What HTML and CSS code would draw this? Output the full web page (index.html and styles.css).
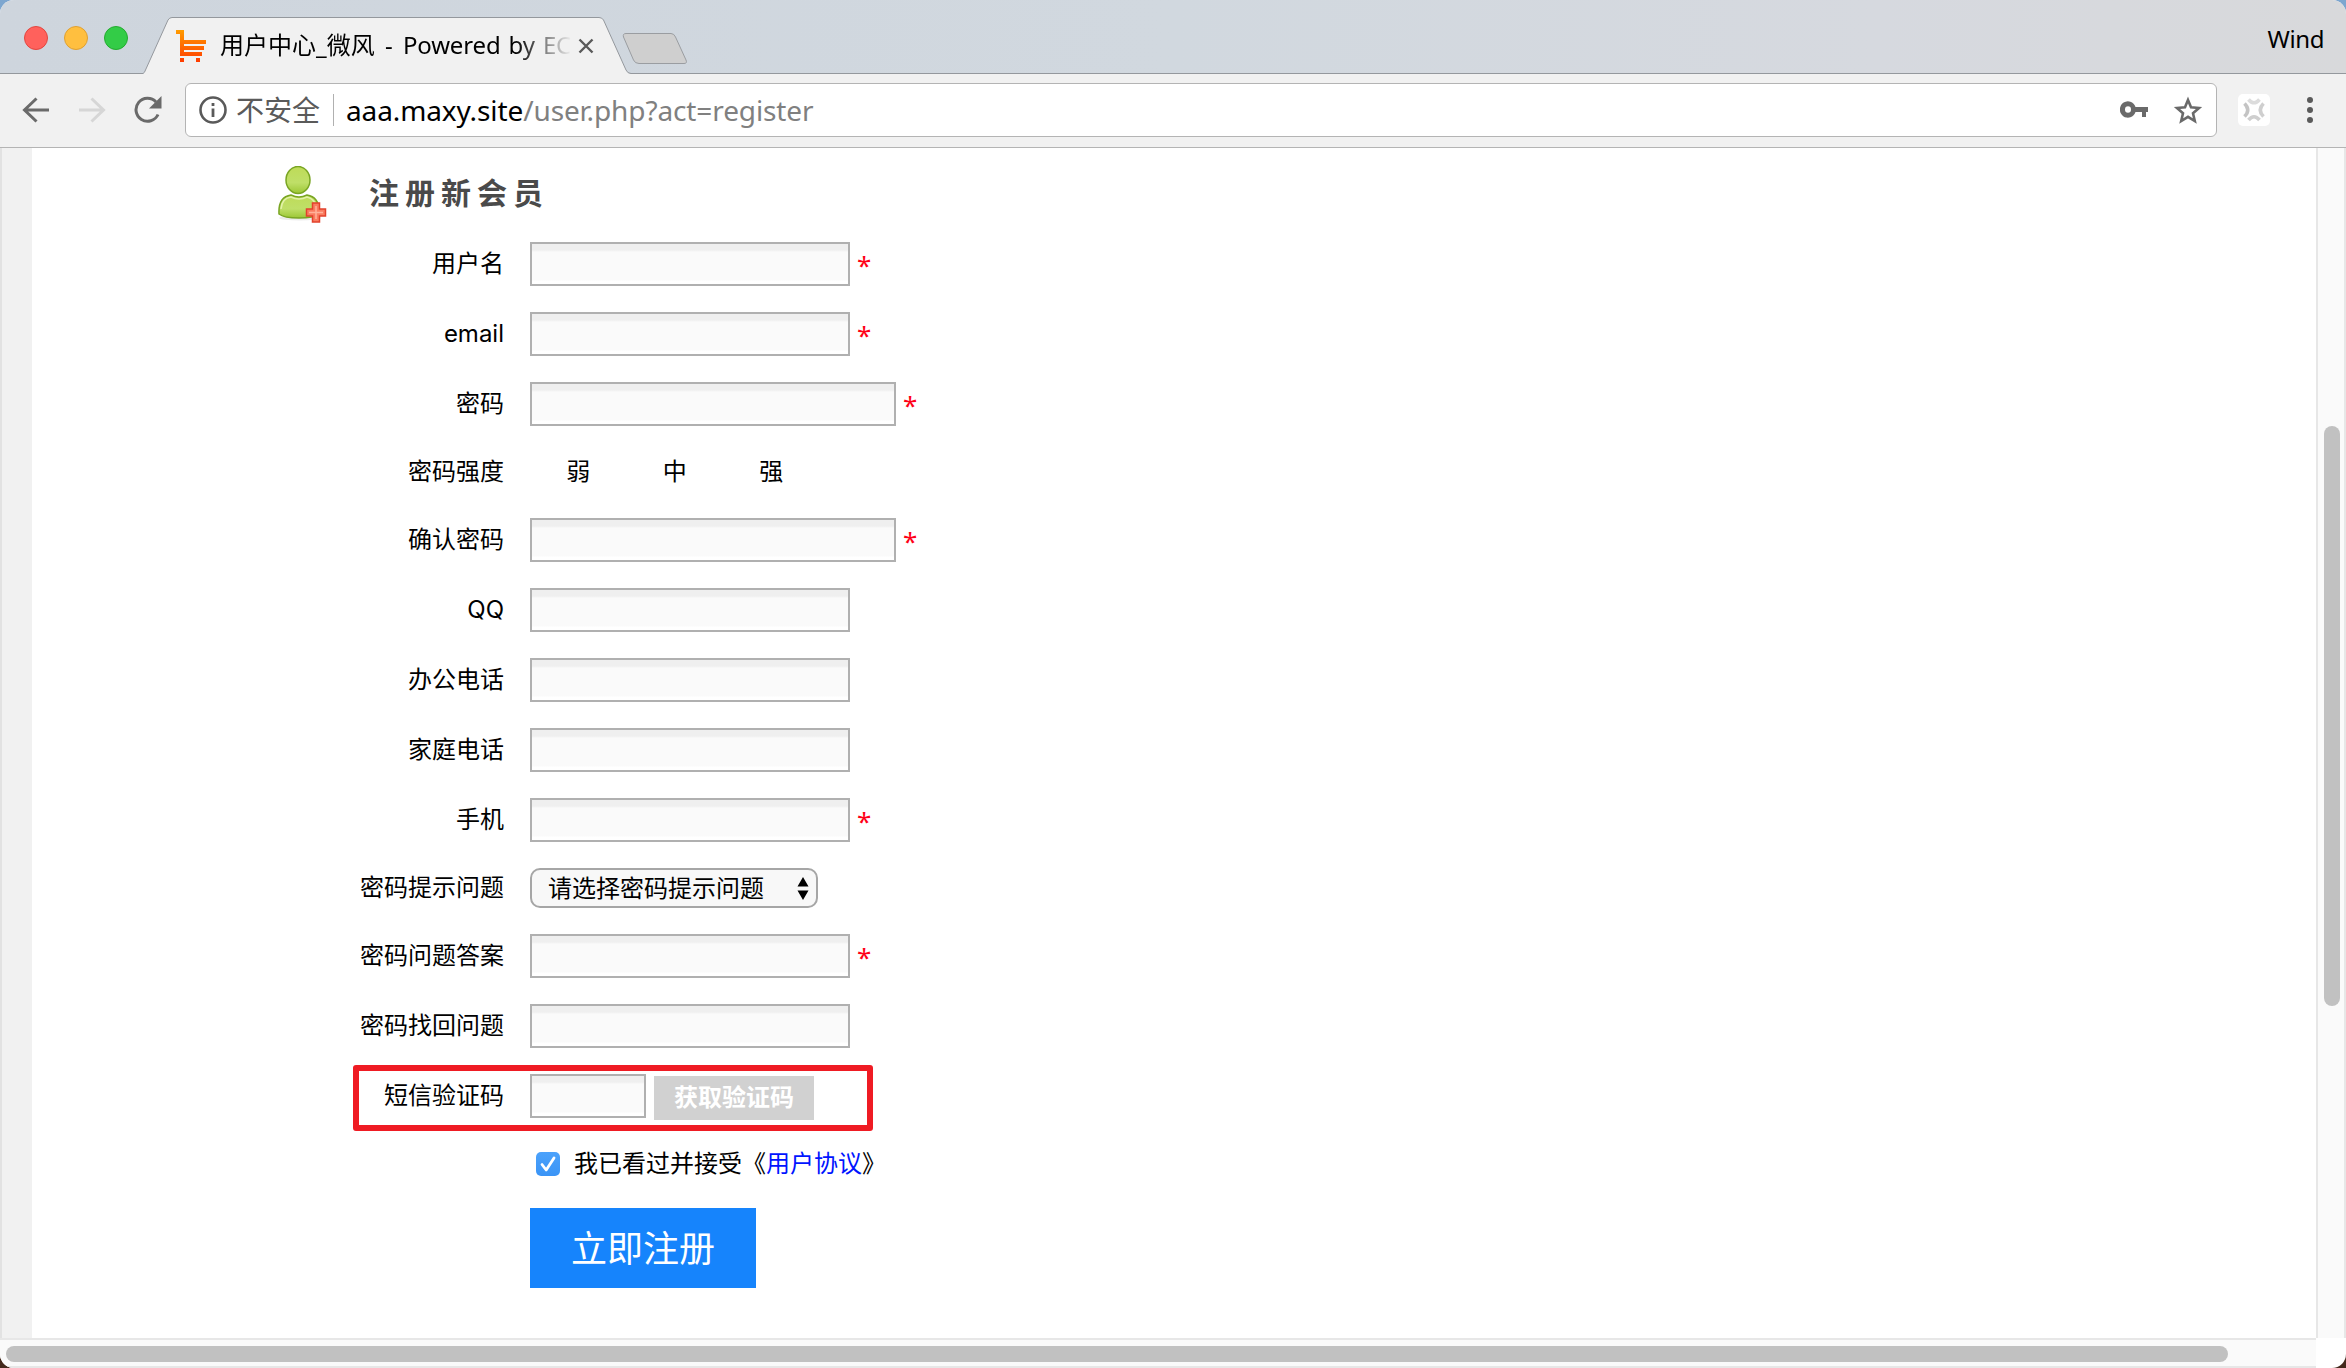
FILE: index.html
```html
<!DOCTYPE html>
<html lang="zh-CN">
<head>
<meta charset="utf-8">
<title>用户中心_微风</title>
<link rel="stylesheet" href="styles.css">
</head>
<body>
<div class="window">
  <header class="tabstrip">
    <div class="lights"><i class="light red"></i><i class="light amber"></i><i class="light green"></i></div>
    <div class="tab">
      <svg class="tab-shape" width="488" height="58" viewBox="0 0 488 58"><path d="M0 56.500 Q1.500 56 2.500 53 L25 3 Q26.500 .5 29 .5 H456 Q459 .5 460.500 3 L483 53 Q484.500 56.500 488 56.500 V58 H0Z" fill="#f1f1f1"/><path d="M0 56.500 Q1.500 56 2.500 53 L25 3 Q26.500 .5 29 .5 H456 Q459 .5 460.500 3 L483 53 Q484.500 56.500 488 56.500" fill="none" stroke="#94989d"/></svg>
      <svg class="cart" width="31" height="32" viewBox="0 0 31 32"><defs><linearGradient id="cg" gradientUnits="userSpaceOnUse" x1="0" y1="0" x2="0" y2="32"><stop offset="0" stop-color="#ff9c00"/><stop offset="1" stop-color="#ff3b00"/></linearGradient></defs><path fill="url(#cg)" d="M0 0H8V10H30V14H8V16H28V20H8V22H26V26H4V4H0ZM4 28H8V32H4ZM20 28H24V32H20Z"/></svg>
      <span class="tab-title"><span class="site-name">用户中心_微风 - </span>Powered by EC</span>
      <svg class="close" width="16" height="16" viewBox="0 0 16 16"><path d="M1.500 1.500 14.500 14.500M14.500 1.500 1.500 14.500" stroke="#5a5a5a" stroke-width="2.400"/></svg>
    </div>
    <svg class="newtab" width="66" height="34" viewBox="0 0 66 34"><path d="M4 1.500H49Q52 1.500 53.500 5L64 28Q65.500 31.500 62 31.500H17Q13 31.500 11.500 28L1.500 5Q.5 1.500 4 1.500Z" fill="#cfcfcf" stroke="#9a9da1"/></svg>
    <span class="profile">Wind</span>
  </header>
  <nav class="toolbar">
    <svg class="nav-back" width="28" height="26" viewBox="0 0 28 26"><path d="M27 13H3M14.500 1.500 2.500 13l12 11.500" fill="none" stroke="#6a6a6a" stroke-width="3"/></svg>
    <svg class="nav-forward" width="28" height="26" viewBox="0 0 28 26"><path d="M1 13H25M13.500 1.500 25.500 13l-12 11.500" fill="none" stroke="#d6d6d6" stroke-width="3"/></svg>
    <svg class="nav-reload" width="28" height="28" viewBox="0 0 28 28"><path d="M24 18.500A11.500 11.500 0 1 1 22 6" fill="none" stroke="#6a6a6a" stroke-width="3"/><path d="M27.500 0V12.500H15Z" fill="#6a6a6a"/></svg>
    <div class="omnibox">
      <svg width="28" height="28" viewBox="0 0 28 28"><circle cx="14" cy="14" r="12.500" fill="none" stroke="#5a5a5a" stroke-width="2.600"/><path d="M12.600 7h2.800v3h-2.800zM12.600 12.500h2.800v8.500h-2.800z" fill="#5a5a5a"/></svg>
      <span class="insecure">不安全</span>
      <span class="url"><b>aaa.maxy.site</b>/user.php?act=register</span>
      <svg class="key" width="28" height="18" viewBox="0 0 28 18"><path fill="#6a6a6a" fill-rule="evenodd" d="M15.500 6H28V11H26V16H22V11H15.500A8 8.200 0 1 1 15.500 6ZM8 5.300A3 3.200 0 1 0 8 11.700 3 3.200 0 1 0 8 5.300Z"/></svg>
      <svg class="star" width="30" height="29" viewBox="0 0 30 29"><path d="M15 4 18 11.300 26 12 20 17.200 21.800 25 15 20.800 8.200 25 10 17.200 4 12 12 11.300Z" fill="none" stroke="#6a6a6a" stroke-width="2.600"/></svg>
    </div>
    <div class="extension"><svg width="22" height="24" viewBox="0 0 22 24" fill="none" stroke-width="3.600"><path d="M5.500 1.500Q11 8 16.500 1.500" stroke="#dcdcdc"/><path d="M5.500 22Q11 15.500 16.500 22" stroke="#cfcfcf"/><path d="M1.500 5.500Q8 12 1.500 18.500" stroke="#c4c4c4"/><path d="M20.500 5.500Q14 12 20.500 18.500" stroke="#cfcfcf"/></svg></div>
    <div class="menu"><i></i><i></i><i></i></div>
  </nav>
  <div class="viewport">
    <main class="page">
      <div class="heading">
        <svg width="50" height="58" viewBox="0 0 50 58"><defs><linearGradient id="ug" x1="0" y1="0" x2="0" y2="1"><stop offset="0" stop-color="#bedb58"/><stop offset=".6" stop-color="#bfdf68"/><stop offset="1" stop-color="#9cc735"/></linearGradient></defs><ellipse cx="22" cy="52" rx="21" ry="2.500" fill="#ececec"/><path d="M1 48Q0 31 13 29Q21 33 29 29Q41 31 41 45V48Q36 52 21 52 6 52 1 48Z" fill="url(#ug)" stroke="#79a523" stroke-width="1.500"/><path d="M3 43Q4 32 13 31Q21 35 29 31Q37 33 39 42" fill="none" stroke="#e2f2a8" stroke-width="1.500"/><ellipse cx="20" cy="14" rx="12" ry="13.500" fill="url(#ug)" stroke="#79a523" stroke-width="1.500"/><path d="M34.500 37h7v6h6v7h-6v6h-7v-6h-6v-7h6z" fill="#fa7c60" stroke="#e2412c" stroke-width="1.500"/><path d="M31 46.500H45M38 40V53" stroke="#ffb29a" stroke-width="1.500"/></svg>
        <h1>注册新会员</h1>
      </div>
      <form class="form">
        <div class="row"><label>用户名</label><input class="field"><em>*</em></div>
        <div class="row"><label>email</label><input class="field"><em>*</em></div>
        <div class="row"><label>密码</label><input class="field wide"><em>*</em></div>
        <div class="row short"><label>密码强度</label><span class="strength"><span>弱</span><span>中</span><span>强</span></span></div>
        <div class="row"><label>确认密码</label><input class="field wide"><em>*</em></div>
        <div class="row"><label>QQ</label><input class="field"></div>
        <div class="row"><label>办公电话</label><input class="field"></div>
        <div class="row"><label>家庭电话</label><input class="field"></div>
        <div class="row"><label>手机</label><input class="field"><em>*</em></div>
        <div class="row short"><label>密码提示问题</label><span class="select"><span>请选择密码提示问题</span><svg width="12" height="24" viewBox="0 0 12 24"><path d="M6 0 11.500 9.500H.5ZM6 23 11.500 13.500H.5Z"/></svg></span></div>
        <div class="row"><label>密码问题答案</label><input class="field"><em>*</em></div>
        <div class="row"><label>密码找回问题</label><input class="field"></div>
        <div class="row sms"><label>短信验证码</label><input class="field code"><button type="button" class="get-code">获取验证码</button></div>
        <div class="row agree"><label></label><span class="check"><svg width="24" height="24" viewBox="0 0 24 24"><path d="M6 12.500 10.200 18 18 6" fill="none" stroke="#fff" stroke-width="2.800" stroke-linecap="round" stroke-linejoin="round"/></svg></span><span class="terms">我已看过并接受《<a>用户协议</a>》</span></div>
        <div class="row"><label></label><button type="button" class="submit">立即注册</button></div>
      </form>
    </main>
    <div class="vscroll"><i></i></div>
    <div class="hscroll"><i></i></div>
  </div>
</div>
</body>
</html>
```
FILE: styles.css
```css
*, *::after { box-sizing: border-box; }
body { margin: 0; background: linear-gradient(#7da6cf 0 50%, #44291c 50%); font: 24px/34px Inter, "Noto Sans CJK SC", sans-serif; color: #000; }
svg { display: block; flex: none; }
.window { width: 2346px; height: 1368px; border-radius: 14px; overflow: hidden; background: #fff; display: flex; flex-direction: column; }

.tabstrip { height: 74px; flex: none; background: linear-gradient(90deg, #ced5dd, #d1d8df 50%, #d6d9df 80%, #d8d9db); border-bottom: 1px solid #94989d; display: flex; align-items: flex-start; font-family: "Noto Sans", "Noto Sans CJK SC", sans-serif; }
.lights { display: flex; gap: 16px; padding: 26px 0 0 24px; width: 143px; flex: none; }
.light { width: 24px; height: 24px; border-radius: 50%; }
.red { background: #ff615c; border: 1px solid #e2463f; }
.amber { background: #ffbf3f; border: 1px solid #dfa032; }
.green { background: #33cc47; border: 1px solid #23ab2f; }
.tab { position: relative; width: 488px; height: 58px; margin-top: 17px; flex: none; display: flex; align-items: center; padding: 0 0 0 33px; }
.tab-shape { position: absolute; left: 0; top: 0; }
.cart { position: relative; margin-top: 0; }
.tab-title { position: relative; width: 356px; margin: -2px 0 0 13px; overflow: hidden; white-space: nowrap; word-spacing: 2px; letter-spacing: -.15px; -webkit-mask: linear-gradient(90deg, #000 295px, transparent 352px); mask: linear-gradient(90deg, #000 295px, transparent 352px); }
.site-name { word-spacing: 4px; letter-spacing: 0; }
.close { position: relative; margin-left: 2px; }
.newtab { margin: 32px 0 0 -9px; }
.profile { margin: 22px 22px 0 auto; letter-spacing: -.4px; }

.toolbar { height: 74px; flex: none; background: #f1f1f1; border-bottom: 1px solid #b4b4b4; display: flex; align-items: center; padding: 0 0 1px 22px; }
.nav-forward { margin-left: 28px; }
.nav-reload { margin-left: 28px; }
.omnibox { width: 2032px; height: 54px; margin-left: 23px; background: #fff; border: 1px solid #b4b4b4; border-radius: 6px; display: flex; align-items: center; padding: 0 13px 0 13px; font: 28px/40px "Noto Sans", "Noto Sans CJK SC", sans-serif; }
.insecure { margin-left: 9px; color: #5a5a5a; }
.url { margin-left: 13px; padding-left: 12px; border-left: 1px solid #b0b0b0; line-height: 32px; color: #808080; white-space: nowrap; letter-spacing: -.11px; }
.url b { font-weight: 400; color: #000; }
.key { margin-left: auto; }
.star { margin-left: 25px; }
.extension { width: 32px; height: 32px; margin-left: 21px; background: #fff; border-radius: 5px; display: flex; align-items: center; justify-content: center; }
.menu { margin-left: 37px; display: grid; gap: 4px; }
.menu i { width: 6px; height: 6px; border-radius: 50%; background: #5a5a5a; }

.viewport { flex: 1; display: grid; grid-template: 1fr 30px / 1fr 30px; min-height: 0; }
.page { background: linear-gradient(90deg, #f1f1f1 30px, #fff 30px); border-left: 2px solid #e2e2e2; padding-left: 276px; }
.heading { height: 94px; display: flex; padding-top: 18px; }
.heading h1 { margin: 7px 0 0 41px; font: 700 30px/36px "Noto Sans CJK SC", sans-serif; letter-spacing: 6px; color: #4a4a4a; }
.form { display: flex; flex-direction: column; gap: 26px; }
.row { display: flex; align-items: center; height: 44px; }
.row label { width: 226px; margin-right: 26px; text-align: right; flex: none; }
.row em { margin-left: 7px; font: 26px/44px "Noto Sans", sans-serif; color: #ff0018; padding-top: 2px; }
.short { height: 40px; }
.agree { height: 38px; }
.field { width: 320px; height: 44px; padding: 0; margin: 0; border: 2px solid #b0b0b0; border-radius: 0; background: linear-gradient(#efefef 0 6px, #fafafa 8px 36px, #fff 37px); }
.wide { width: 366px; }
.code { width: 116px; }
.strength { display: flex; }
.strength span { width: 96.500px; text-align: center; }
.select { width: 288px; height: 40px; border: 2px solid #a6a6a6; border-radius: 10px; background: #f8f8f8; display: flex; align-items: center; justify-content: space-between; padding: 1px 7px 0 16px; }
.sms { position: relative; }
.sms::after { content: ""; position: absolute; left: 75px; top: -9px; width: 520px; height: 66px; border: 6px solid #ef1b23; border-radius: 3px; }
.get-code { width: 160px; height: 44px; margin: 4px 0 0 8px; padding: 0 0 4px; border: 0; background: #d1d1d1; color: #fff; font: 700 24px/40px "Noto Sans CJK SC", sans-serif; }
.check { width: 24px; height: 24px; margin: 2px 14px 0 6px; border-radius: 5px; background: linear-gradient(#4ca2fb, #3a94f6); }
.terms { white-space: nowrap; padding-top: 2px; }
.terms a { color: #0014ff; }
.submit { width: 226px; height: 80px; align-self: flex-start; flex: none; border: 0; padding: 0 0 4px; background: #1684fc; color: #fff; font: 36px/76px "Noto Sans CJK SC", sans-serif; }

.vscroll { background: #fafafa; border: solid #e7e7e7; border-width: 0 2px; }
.vscroll i { display: block; width: 16px; height: 580px; margin: 278px 0 0 6px; border-radius: 8px; background: #c1c1c1; }
.hscroll { background: #fafafa; border: solid #e7e7e7; border-width: 2px 0; padding: 6px; }
.hscroll i { display: block; width: 2222px; height: 16px; border-radius: 8px; background: #c1c1c1; }
```
